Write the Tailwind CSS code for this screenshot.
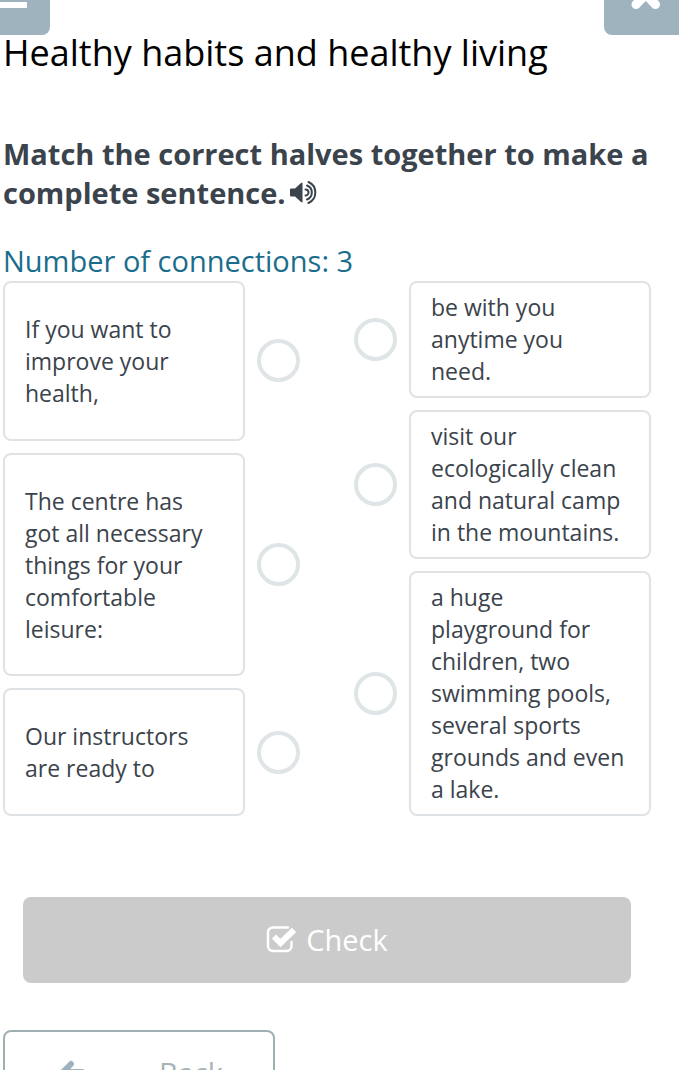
<!DOCTYPE html>
<html lang="en">
<head>
<meta charset="utf-8">
<meta name="viewport" content="width=device-width, initial-scale=1">
<title>Healthy habits and healthy living</title>
<script src="https://cdn.jsdelivr.net/npm/@tailwindcss/browser@4"></script>
</head>
<body class="h-screen overflow-hidden bg-white font-['Open_Sans','Noto_Sans',sans-serif] text-[#3b434c]">
<header class="flex h-[35px] justify-between">
  <button aria-label="Menu" class="w-[50px] rounded-br-lg bg-[#9fb3bf]">
    <svg class="h-[35px] w-[50px]" viewBox="0 0 50 35"><path d="M0 2H26a1 1 0 0 1 1 1V7a1 1 0 0 1-1 1H0Z" fill="#fff"/></svg>
  </button>
  <button aria-label="Close" class="w-[75px] rounded-bl-lg bg-[#9fb3bf]">
    <svg class="h-[35px] w-[75px]" viewBox="0 0 75 35"><path d="M32 4.500 41.800-5.500 51.500 4.500" fill="none" stroke="#fff" stroke-width="9" stroke-linecap="round" stroke-linejoin="round"/></svg>
  </button>
</header>
<main class="pl-[3px]">
  <h1 class="h-9 text-4xl leading-9 text-black">Healthy habits and healthy living</h1>
  <h2 class="mt-[63px] text-[29px] leading-[39px] font-bold">Match the correct halves together to make a complete sentence.<button aria-label="Listen" class="ml-1 inline-block align-baseline"><svg class="h-6 w-7" viewBox="0 0 28 24"><path d="M0 9.500Q0 8.500 1 8.500H5L11 3Q12.500 2 12.500 3.500V21.500Q12.500 23 11 22L5 16.500H1Q0 16.500 0 15.500Z" fill="currentColor"/><path d="M15.500 9.500a3 3 0 0 1 0 6M17 5.500a7.500 7.500 0 0 1 0 14M18.500 2a11.500 11.500 0 0 1 0 21" fill="none" stroke="currentColor" stroke-width="2" stroke-linecap="round"/></svg></button>
  </h2>
  <p class="mt-[29px] h-10 text-[29px] leading-10 text-[#1b6d8c]">Number of connections: 3</p>
  <div class="mr-7 flex min-h-[535px] justify-between text-[23px] leading-8">
    <ul class="flex w-[297px] flex-col gap-3">
      <li class="flex grow items-center gap-3"><div class="flex h-full flex-1 items-center rounded-lg border-2 border-[#dfe3e6] px-5 py-2">If you want to improve your health,</div><button aria-label="Connect first half 1" class="size-[43px] shrink-0 rounded-full border-4 border-[#dfe4e7]"></button></li>
      <li class="flex grow items-center gap-3"><div class="flex h-full flex-1 items-center rounded-lg border-2 border-[#dfe3e6] px-5 py-2">The centre has got all necessary things for your comfortable leisure:</div><button aria-label="Connect first half 2" class="size-[43px] shrink-0 rounded-full border-4 border-[#dfe4e7]"></button></li>
      <li class="flex grow items-center gap-3"><div class="flex h-full flex-1 items-center rounded-lg border-2 border-[#dfe3e6] px-5 py-2">Our instructors are ready to</div><button aria-label="Connect first half 3" class="size-[43px] shrink-0 rounded-full border-4 border-[#dfe4e7]"></button></li>
    </ul>
    <ul class="flex w-[297px] flex-col gap-3">
      <li class="flex grow items-center gap-3"><button aria-label="Connect second half 1" class="size-[43px] shrink-0 rounded-full border-4 border-[#dfe4e7]"></button><div class="flex h-full flex-1 items-center rounded-lg border-2 border-[#dfe3e6] px-5 pt-1.5 pb-2">be with you anytime you need.</div></li>
      <li class="flex grow items-center gap-3"><button aria-label="Connect second half 2" class="size-[43px] shrink-0 rounded-full border-4 border-[#dfe4e7]"></button><div class="flex h-full flex-1 items-center rounded-lg border-2 border-[#dfe3e6] px-5 pt-1.5 pb-2">visit our ecologically clean and natural camp in the mountains.</div></li>
      <li class="flex grow items-center gap-3"><button aria-label="Connect second half 3" class="size-[43px] shrink-0 rounded-full border-4 border-[#dfe4e7]"></button><div class="flex h-full flex-1 items-center rounded-lg border-2 border-[#dfe3e6] px-5 pt-1.5 pb-2">a huge playground for children, two swimming pools, several sports grounds and even a lake.</div></li>
    </ul>
  </div>
  <div class="mt-[81px] mr-12 pl-5">
    <button class="flex h-[86px] w-full items-center justify-center gap-2.5 rounded-lg bg-[#cbcbcb] text-[29px] text-white">
      <svg class="h-7 w-[30px]" viewBox="0 0 30 28"><path d="M22 1.500H7a5 5 0 0 0-5 5V20a5 5 0 0 0 5 5H20.500a5 5 0 0 0 5-5V16" fill="none" stroke="#fff" stroke-width="2.500" stroke-linecap="round"/><path d="M8 10.500l6.500 6.500L28 4" fill="none" stroke="#fff" stroke-width="6"/></svg>
      Check
    </button>
  </div>
  <button class="mt-[47px] flex h-[86px] w-[272px] items-center justify-between rounded-lg border-2 border-[#9fb0b3] pr-[50px] pl-[54px] text-[29px] text-[#a7b3b9]">
    <svg class="h-8 w-8" viewBox="0 0 32 32"><path d="M12 7 4 15l8 8M4 15H23" fill="none" stroke="#9fb3bf" stroke-width="6" stroke-linecap="round" stroke-linejoin="round"/></svg>
    Back
  </button>
</main>
</body>
</html>
